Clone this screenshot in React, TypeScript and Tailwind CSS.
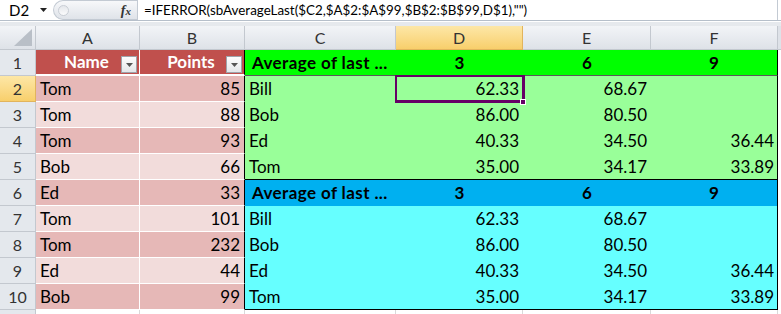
import React from 'react';

const font = { fontFamily: 'Lato, "Open Sans", sans-serif' };

const tableRows: [string, number][] = [
  ['Tom', 85],
  ['Tom', 88],
  ['Tom', 93],
  ['Bob', 66],
  ['Ed', 33],
  ['Tom', 101],
  ['Tom', 232],
  ['Ed', 44],
  ['Bob', 99],
];

const avgRows: [string, string, string, string][] = [
  ['Bill', '62.33', '68.67', ''],
  ['Bob', '86.00', '80.50', ''],
  ['Ed', '40.33', '34.50', '36.44'],
  ['Tom', '35.00', '34.17', '33.89'],
];

// right-hand block: green header + rows, then blue header + rows
const block = [
  { kind: 'head', bg: 'bg-[#00ff00]', border: 'border-b border-[#5a5a5a]' },
  ...avgRows.map((r, i) => ({ kind: 'row', r, bg: 'bg-[#99ff99]', border: i === 3 ? 'border-b border-black' : '' })),
  { kind: 'head', bg: 'bg-[#00b0f0]', border: '' },
  ...avgRows.map((r, i) => ({ kind: 'row', r, bg: 'bg-[#66ffff]', border: i === 3 ? 'border-b border-black' : '' })),
] as { kind: string; r?: string[]; bg: string; border: string }[];

function FilterButton() {
  return (
    <div className="absolute right-[2px] top-[6px] w-[16px] h-[17px] border border-[#9ea4ab] bg-gradient-to-b from-[#fdfdfd] to-[#e4e6e9] flex items-center justify-center">
      <svg width="7" height="4" viewBox="0 0 7 4">
        <path d="M0 0h7L3.5 4z" fill="#555" />
      </svg>
    </div>
  );
}

function ColHeader({ label, w, selected }: { label: string; w: string; selected?: boolean }) {
  return (
    <div
      className={`${w} h-full flex items-center justify-center text-[16px] text-[#333] border-r border-b ${
        selected
          ? 'bg-gradient-to-b from-[#fde7a6] to-[#f8cf6b] border-[#e2b45c]'
          : 'bg-gradient-to-b from-[#f2f4f7] to-[#dee2e8] border-[#c3c8cf]'
      }`}
    >
      {label}
    </div>
  );
}

export default function App() {
  return (
    <div className="w-[781px] h-[314px] overflow-hidden bg-white" style={font}>
      {/* Formula bar */}
      <div className="flex h-[21px] border-b border-[#b6bfca] bg-white">
        <div className="w-[53px] flex items-center justify-between pl-[9px] pr-[6px] text-[15px] text-black">
          <span>D2</span>
          <svg width="7" height="4" viewBox="0 0 7 4">
            <path d="M0 0h7L3.5 4z" fill="#222" />
          </svg>
        </div>
        <div className="w-[84px] flex items-center justify-between rounded-l-full border border-r-0 border-[#c3cad3] bg-gradient-to-b from-[#f7f8fa] to-[#dfe3e9] pl-[4px] pr-[6px]">
          <div className="w-[11px] h-[11px] rounded-full border border-[#c9ced5] bg-gradient-to-b from-[#e4e7eb] to-[#fbfbfc]" />
          <span className="text-[14px] italic font-bold text-[#333]" style={{ fontFamily: '"Liberation Serif", serif' }}>
            f<span className="text-[11px]">x</span>
          </span>
        </div>
        <div className="flex-1 flex items-center border-l border-r border-[#c3cad3] pl-[6px] text-[13.4px] text-black whitespace-nowrap mr-[3px]">
          =IFERROR(sbAverageLast($C2,$A$2:$A$99,$B$2:$B$99,D$1),"")
        </div>
      </div>
      <div className="h-[5px] border-t border-white bg-[#e6e9ed]" />

      {/* Column headers */}
      <div className="flex h-[24px]">
        <div className="w-[36px] h-full flex items-end justify-end p-[3px] border-r border-b border-[#c3c8cf] bg-gradient-to-b from-[#f2f4f7] to-[#dee2e8]">
          <svg width="18" height="17" viewBox="0 0 18 17">
            <path d="M18 0V17H0z" fill="#b9bfc7" />
          </svg>
        </div>
        <ColHeader label="A" w="w-[104px]" />
        <ColHeader label="B" w="w-[105px]" />
        <ColHeader label="C" w="w-[151px]" />
        <ColHeader label="D" w="w-[127px]" selected />
        <ColHeader label="E" w="w-[128px]" />
        <ColHeader label="F" w="w-[127px]" />
        <div className="flex-1 h-full bg-[#dee2e8] border-b border-[#c3c8cf]" />
      </div>

      {/* Rows */}
      {block.map((b, i) => {
        const rowNum = i + 1;
        const selected = rowNum === 2;
        const isTableHead = i === 0;
        const t = tableRows[i - 1];
        const dark = i % 2 === 1;
        const abBg = isTableHead ? 'bg-[#c0504d]' : dark ? 'bg-[#e6b8b7]' : 'bg-[#f2dcdb]';
        const abBorder = isTableHead ? 'border-b-2' : 'border-b';
        return (
          <div key={i} className="flex h-[26px] text-[17px] text-black">
            <div
              className={`w-[36px] h-full flex items-center justify-center text-[16px] text-[#333] border-r border-b ${
                selected
                  ? 'bg-gradient-to-b from-[#fde7a6] to-[#f8cf6b] border-[#e2b45c]'
                  : 'bg-[#e4e8ed] border-[#c3c8cf]'
              }`}
            >
              {rowNum}
            </div>
            {isTableHead ? (
              <>
                <div className={`relative w-[104px] h-full flex items-center justify-center ${abBg} border-r ${abBorder} border-white font-bold text-white`}>
                  <span className="mr-[2px]">Name</span>
                  <FilterButton />
                </div>
                <div className={`relative w-[105px] h-full flex items-center justify-center ${abBg} border-r border-r-black ${abBorder} border-b-white font-bold text-white`}>
                  <span className="mr-[2px]">Points</span>
                  <FilterButton />
                </div>
              </>
            ) : (
              <>
                <div className={`w-[104px] h-full flex items-center pl-[4px] ${abBg} border-r ${abBorder} border-white`}>{t[0]}</div>
                <div className={`w-[105px] h-full flex items-center justify-end pr-[4px] ${abBg} border-r border-r-black ${abBorder} border-b-white`}>
                  {t[1]}
                </div>
              </>
            )}
            <div className={`flex h-full ${b.bg} ${b.border} border-r border-r-black`}>
              {b.kind === 'head' ? (
                <>
                  <div className="w-[151px] flex items-center pl-[7px] font-bold whitespace-nowrap tracking-[0.4px]">Average of last ...</div>
                  <div className="w-[127px] flex items-center justify-center font-bold">3</div>
                  <div className="w-[128px] flex items-center justify-center font-bold">6</div>
                  <div className="w-[126px] flex items-center justify-center font-bold">9</div>
                </>
              ) : (
                <>
                  <div className="w-[151px] flex items-center pl-[4px]">{b.r![0]}</div>
                  <div className="relative w-[127px] flex items-center justify-end pr-[4px]">
                    {b.r![1]}
                    {selected && (
                      <>
                        <div className="absolute -left-[1px] -top-[1px] w-[130px] h-[28px] border-2 border-r-[3px] border-b-[3px] border-[#660066] z-10" />
                        <div className="absolute left-[124px] top-[23px] w-[6px] h-[6px] bg-[#660066] border border-white z-10" />
                      </>
                    )}
                  </div>
                  <div className="w-[128px] flex items-center justify-end pr-[4px]">{b.r![2]}</div>
                  <div className="w-[126px] flex items-center justify-end pr-[3px]">{b.r![3]}</div>
                </>
              )}
            </div>
          </div>
        );
      })}

      {/* Row 11 (partial) */}
      <div className="flex h-[4px]">
        <div className="w-[36px] h-full bg-[#e4e8ed] border-r border-[#c3c8cf]" />
        <div className="w-[104px] h-full border-r border-[#d9d9d9]" />
        <div className="w-[105px] h-full border-r border-[#d9d9d9]" />
        <div className="w-[151px] h-full border-r border-[#d9d9d9]" />
        <div className="w-[127px] h-full border-r border-[#d9d9d9]" />
        <div className="w-[128px] h-full border-r border-[#d9d9d9]" />
        <div className="w-[127px] h-full border-r border-[#d9d9d9]" />
      </div>
    </div>
  );
}
